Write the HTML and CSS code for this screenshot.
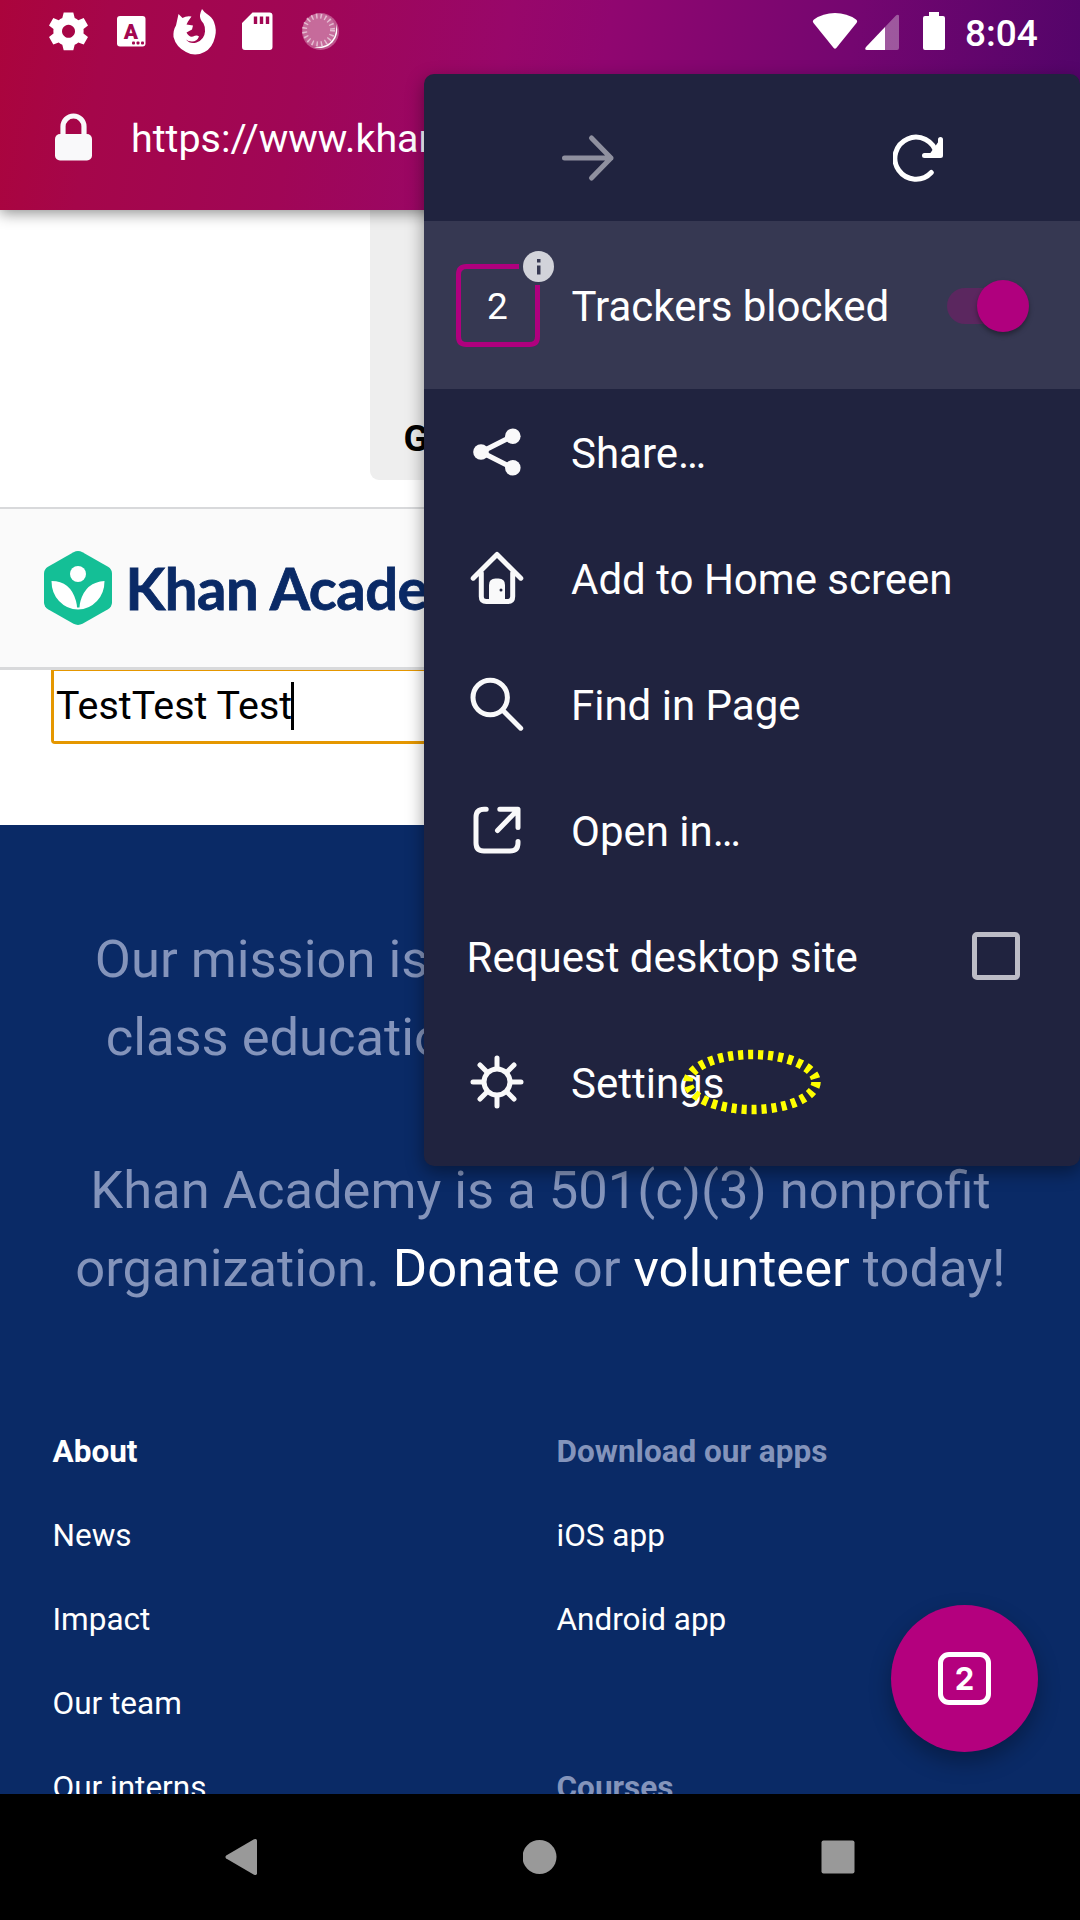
FILE: index.html
```html
<!DOCTYPE html>
<html lang="en">
<head>
<meta charset="utf-8">
<title>Khan Academy</title>
<link rel="stylesheet" href="styles.css">
</head>
<body>
<div class="screen">
  <header class="browser-head">
    <div class="status-bar">
      <svg class="status-left" width="300" height="63" viewBox="0 0 300 63">
        <g transform="translate(-6 0)" fill="#fff">
          <path fill-rule="evenodd" d="M23.700 12.500h9.600l1.400 5.500q2.200.9 3.600 2.300l5.400-2.200 4.300 7.400-4.500 3.600q.3 2.200 0 4.500l4.500 3.500-4.300 7.400-5.400-2.100q-1.400 1.500-3.600 2.400l-1.400 5.400h-9.600l-1.400-5.400q-2.200-.9-3.600-2.400l-5.400 2.100-4.300-7.400 4.500-3.500q-.3-2.300 0-4.500l-4.500-3.600 4.300-7.400 5.400 2.200q1.400-1.400 3.600-2.300zM28.500 24.800a6.500 6.500 0 1 0 .01 0z"/>
          <rect x="77" y="16" width="28.500" height="30.500" rx="3"/>
          <rect x="92" y="41.500" width="3" height="3" rx="1" fill="#a30750"/><rect x="96.500" y="41.500" width="3" height="3" rx="1" fill="#a30750"/><rect x="101" y="41.500" width="3" height="3" rx="1" fill="#a30750"/>
          <text class="badge-letter" x="91" y="38.500" text-anchor="middle">A</text>
          <path transform="translate(-1 0)" fill-rule="evenodd" d="M139.500 14l4 4q4-2.500 9-1.500l-3.500 5-1.500 3 6.500 1-1 4-5.500 3q2.500 5 6.500 4 4-2 6 0-2 5-7 5-4 0-6-2 4 5 10.500 3 8-3 8.500-11 .3-5-1.500-8-4-4-3.500-8.500.5-3 2-6 2 3 5 5 5 3 7 8 3 8 1 15-2.500 11-10.500 15-9.500 5-18.500 0-10-5-12.500-15-.5-7 2.500-11.500z"/>
          <path fill-rule="evenodd" d="M212.500 12.500h17a3 3 0 0 1 3 3v31.500a3 3 0 0 1-3 3h-24.500a3 3 0 0 1-3-3v-24zm1.300 4v7.500h3.400v-7.500zm6 0v7.500h3.400v-7.500zm6 0v7.500h3.400v-7.500z"/>
          <circle cx="280.500" cy="31.500" r="18.500" opacity=".32"/>
          <circle cx="278.500" cy="30" r="14" fill="none" stroke="#fff" stroke-width="5" stroke-dasharray="1.500 3" opacity=".55"/>
          <path d="M296 24a17.500 17.500 0 0 1-22 23q13 1 19-8 4-6 3-15z"/>
          <circle cx="279" cy="30" r="16.500" opacity=".13"/>
        </g>
      </svg>
      <svg class="status-right" width="140" height="63" viewBox="0 0 140 63" fill="#fff">
        <path d="M2.500 23q-1.500-2 .5-3.500 9-6.500 21-6.500t21 6.500q2 1.500.5 3.500L25.300 48q-1.300 1.500-2.600 0z"/>
        <path d="M91 15.500v32.500q0 2-2 2H77V27L86.500 17q3-3.500 4.500-1.500z" transform="translate(-3 0)" opacity=".33"/>
        <path d="M74 27v23H56q-3 0-1-3z"/>
        <path d="M118 12h10v4h4q2 0 2 2v30q0 2-2 2h-18q-2 0-2-2v-30q0-2 2-2h4z"/>
      </svg>
      <span class="clock">8:04</span>
    </div>
    <div class="url-bar">
      <svg width="38" height="48" viewBox="0 0 38 48"><rect x="0" y="21" width="37" height="26.500" rx="5" fill="#f9f9fa"/><path d="M8 23v-9.500a10.500 10.500 0 0 1 21 0v9.500" fill="none" stroke="#f9f9fa" stroke-width="5.200"/></svg>
      <span class="url">https://www.khanacademy.org</span>
    </div>
  </header>

  <main class="page">
    <section class="prompt-area"><div class="prompt">G</div></section>
    <section class="brand-bar">
      <svg width="68" height="74" viewBox="0 0 68 74">
        <path d="M29.500 1.200q4.500-2.200 9 0l25.500 14.500q4 2.300 4 7v28.500q0 4.700-4 7L38.500 72.800q-4.500 2.200-9 0L4 58.200q-4-2.300-4-7V22.700q0-4.700 4-7z" fill="#14bf96"/>
        <circle cx="34" cy="23" r="8" fill="#fff"/>
        <path d="M7.500 30q19 0 24.500 20 1 4 1 6.500h2.500q0-3 1-6.500Q42 31 60.500 30q0 12-7.500 20-8 8.500-19 8.500T15 50Q7.500 42 7.500 30z" fill="#fff"/>
      </svg>
      <span class="brand">Khan Academy</span>
    </section>
    <section class="search-area">
      <div class="field"><span>TestTest Test</span><i class="caret"></i></div>
    </section>
    <section class="site-footer">
      <p class="mission">Our mission is to provide a free, world-<br>class education to anyone, anywhere.</p>
      <p class="mission">Khan Academy is a 501(c)(3) nonprofit<br>organization. <b>Donate</b> or <b>volunteer</b> today!</p>
      <div class="columns">
        <ul>
          <li class="heading">About</li>
          <li>News</li>
          <li>Impact</li>
          <li>Our team</li>
          <li>Our interns</li>
        </ul>
        <ul>
          <li class="heading dim">Download our apps</li>
          <li>iOS app</li>
          <li>Android app</li>
          <li></li>
          <li class="heading dim">Courses</li>
        </ul>
      </div>
    </section>
  </main>

  <nav class="system-nav">
    <svg width="34" height="38" viewBox="0 0 34 38"><path d="M1.200 17.500L29 1.300q3-1.300 3 1.500v32.500q0 2.700-3 1.400L1.200 20.500q-1.500-1.500 0-3z" fill="#999"/></svg>
    <svg width="34" height="34" viewBox="0 0 34 34"><circle cx="16.500" cy="17" r="17" fill="#999"/></svg>
    <svg width="34" height="34" viewBox="0 0 34 34"><rect x=".5" y=".5" width="33" height="33" rx="2" fill="#999"/></svg>
  </nav>

  <button class="fab"><span>2</span></button>

  <aside class="menu">
    <div class="menu-nav">
      <svg width="54" height="48" viewBox="0 0 54 48" fill="none" stroke="#8f909f" stroke-width="5" stroke-linecap="round" stroke-linejoin="round"><path d="M3.500 24H50M30.500 4L50 24 30.500 44"/></svg>
      <svg width="52" height="48" viewBox="0 0 52 48" fill="none" stroke="#fff" stroke-width="5" stroke-linecap="round"><path d="M38.300 38.500A21 21 0 1 1 43.500 20"/><path d="M47.500 5.500V21.500H31.500" stroke-linejoin="round"/><path d="M44 14v7h-5z"/></svg>
    </div>
    <div class="row trackers">
      <div class="counter">
        <svg width="100" height="104" viewBox="0 0 100 104">
          <path d="M63 19.500H10.500q-8 0-8 8V89.500q0 8 8 8H73.500q8 0 8-8V38" fill="none" stroke="#b0007e" stroke-width="5"/>
          <circle cx="82.500" cy="19.500" r="15.500" fill="#d2d3da"/>
          <path d="M81 12h3.500v3.500h-3.500zM81 18.500h3.500v9h-3.500z" fill="#363852"/>
        </svg>
        <span>2</span>
      </div>
      <span class="label">Trackers blocked</span>
      <i class="switch"></i>
    </div>
    <div class="row">
      <svg width="54" height="54" viewBox="0 0 54 54" fill="#f9f9fa"><path d="M42.800 11L11.200 27l31.600 16" fill="none" stroke="#f9f9fa" stroke-width="5.200"/><circle cx="42.800" cy="11.200" r="7.800"/><circle cx="11" cy="27" r="7.800"/><circle cx="42.800" cy="42.800" r="7.800"/></svg>
      <span class="label">Share…</span>
    </div>
    <div class="row">
      <svg width="54" height="54" viewBox="0 0 54 54" fill="none" stroke="#f9f9fa" stroke-width="5" stroke-linecap="round" stroke-linejoin="round"><path d="M3.200 27.200L27 3.500 50.800 27.200M11.300 22v23.500q0 5 5 5h21.400q5 0 5-5V22"/><path d="M19 50V34q0-6.500 6.500-6.500h3q6.500 0 6.500 6.500V50z" fill="#f9f9fa" stroke="none"/><circle cx="31" cy="39" r="1.500" fill="#20233f" stroke="none"/></svg>
      <span class="label">Add to Home screen</span>
    </div>
    <div class="row">
      <svg width="54" height="54" viewBox="0 0 54 54" fill="none" stroke="#f9f9fa" stroke-width="5" stroke-linecap="round"><circle cx="20.200" cy="20.500" r="17.200"/><path d="M33 33.500L50.700 51.200"/></svg>
      <span class="label">Find in Page</span>
    </div>
    <div class="row">
      <svg width="54" height="54" viewBox="0 0 54 54" fill="none" stroke="#f9f9fa" stroke-width="5" stroke-linecap="round" stroke-linejoin="round"><path d="M16.200 6.200H14q-8 0-8 8V40q0 8 8 8h26q8 0 8-8v-1.500M29.800 6.200H48v18.300M27.500 27.500L47.500 7"/></svg>
      <span class="label">Open in…</span>
    </div>
    <div class="row check-row">
      <span class="label">Request desktop site</span>
      <i class="checkbox"></i>
    </div>
    <div class="row">
      <svg width="54" height="54" viewBox="0 0 54 54" fill="none" stroke="#f9f9fa" stroke-width="5" stroke-linecap="round"><circle cx="27" cy="27" r="13"/><path d="M27 3v9M27 42v9M3 27h9M42 27h9M10 10l7 7M37 37l7 7M44 10l-7 7M17 37l-7 7"/></svg>
      <span class="label">Settings</span>
    </div>
    <svg class="touch-mark" width="140" height="66" viewBox="0 0 140 66"><ellipse cx="70" cy="33" rx="64" ry="27.500" fill="none" stroke="#ff0" stroke-width="9.500" stroke-dasharray="5.100 4.900"/></svg>
  </aside>
</div>
</body>
</html>
```

FILE: styles.css
```css
* { box-sizing: border-box; }
body { margin: 0; font-family: Roboto, "Noto Sans", sans-serif; }
svg { display: block; flex: none; }

.screen {
  position: relative;
  display: flex;
  flex-direction: column;
  width: 1080px;
  height: 1920px;
  overflow: hidden;
  background: #000;
}

/* Browser header */
.browser-head {
  position: relative;
  z-index: 1;
  flex: none;
  height: 210px;
  background: linear-gradient(100deg, #ab043c 0%, #a5064a 10%, #a00656 28%, #98076a 46%, #900670 55%, #740670 77%, #500469 100%);
  box-shadow: 0 3px 14px rgba(0, 0, 0, .45);
}
.status-bar { display: flex; height: 63px; padding-left: 46px; }
.status-right { margin-left: 465px; }
.badge-letter { font: 900 21px Roboto, sans-serif; fill: #a30750; }
.clock { margin-left: 14px; color: #fff; font-size: 37px; font-weight: 500; line-height: 67px; }
.url-bar { display: flex; align-items: center; height: 147px; padding-left: 55px; gap: 38px; }
.url { padding-top: 3px; color: #fff; font-size: 39.4px; white-space: nowrap; }

/* Web page */
.page { flex: none; height: 1584px; overflow: hidden; background: #fff; }
.prompt-area { height: 297px; padding-left: 370px; }
.prompt {
  height: 270px;
  padding: 207px 0 0 33.500px;
  border-radius: 0 0 0 9px;
  background: #eee;
  color: #000;
  font-size: 37px;
  font-weight: 700;
  line-height: 44px;
}
.brand-bar {
  display: flex;
  align-items: center;
  gap: 14px;
  height: 163px;
  padding: 0 0 1px 43.500px;
  border-top: 2px solid #d8d9db;
  border-bottom: 3px solid #d8d9db;
  background: #fafafa;
}
.brand {
  color: #0a2a66;
  font: 700 58px Lato, sans-serif;
  letter-spacing: -.5px;
  white-space: nowrap;
  -webkit-text-stroke: .8px #0a2a66;
}
.search-area { height: 154.500px; padding-left: 51px; }
.field {
  display: flex;
  align-items: center;
  height: 74px;
  padding: 0 0 1px 2px;
  border: solid #e59700;
  border-width: 1px 0 3px 3px;
  border-radius: 0 0 0 4px;
  font-size: 39.4px;
}
.caret { width: 3px; height: 48px; margin-left: -1px; background: #000; }

.site-footer { height: 1000px; padding-top: 95px; background: #0a2a66; }
.mission {
  margin: 0 0 73.500px 1px;
  color: #8494bb;
  font-size: 52.500px;
  line-height: 78.750px;
  text-align: center;
  white-space: nowrap;
}
.mission b { color: #fff; font-weight: 400; }
.columns { display: grid; grid-template-columns: 504px 1fr; margin-top: 102px; padding-left: 52.500px; }
.columns ul { margin: 0; padding: 0; list-style: none; }
.columns li { height: 84px; color: #fff; font-size: 31.500px; line-height: 84px; }
.columns .heading { font-weight: 700; }
.columns .dim { color: #8494bb; }

.system-nav {
  display: flex;
  flex: none;
  align-items: center;
  justify-content: space-between;
  height: 126px;
  padding: 0 225px;
  background: #000;
}

/* Floating tab button */
.fab {
  position: absolute;
  z-index: 1;
  left: 891px;
  top: 1605px;
  display: flex;
  align-items: center;
  justify-content: center;
  width: 147px;
  height: 147px;
  padding: 0;
  border: 0;
  border-radius: 50%;
  background: #b4007e;
  box-shadow: 0 10px 22px rgba(0, 0, 0, .3);
}
.fab span {
  width: 53px;
  height: 53px;
  border: 5px solid #fff;
  border-radius: 11px;
  color: #fff;
  font: 700 31px/43px Inter, sans-serif;
}

/* Overflow menu */
.menu {
  position: absolute;
  z-index: 2;
  top: 74px;
  right: 0;
  width: 656px;
  height: 1092px;
  border-radius: 10px;
  background: #20233f;
  box-shadow: 0 6px 18px rgba(0, 0, 0, .4);
  color: #fff;
}
.menu-nav { display: flex; height: 147px; padding: 60px 0 0 136.500px; gap: 278.500px; }
.row { display: flex; align-items: center; height: 126px; padding: 0 0 1px 46px; gap: 47px; }
.label { padding-top: 4px; font-size: 42px; white-space: nowrap; }
.trackers { height: 168px; padding: 0 0 0 32px; gap: 15.500px; background: #363852; }
.trackers .label { padding-top: 3px; }
.counter { display: grid; height: 104px; margin-top: -13px; }
.counter > * { grid-area: 1 / 1; }
.counter span { width: 83px; padding-top: 38px; font-size: 37px; line-height: 44px; text-align: center; }
.switch {
  position: relative;
  width: 72px;
  height: 36px;
  margin-left: auto;
  margin-right: 61.500px;
  margin-top: 1px;
  border-radius: 18px;
  background: #5b275f;
}
.switch::after {
  content: "";
  position: absolute;
  right: -10px;
  top: -8px;
  width: 52px;
  height: 52px;
  border-radius: 50%;
  background: #b0007e;
  box-shadow: 0 3px 5px rgba(0, 0, 0, .35);
}
.check-row { padding-left: 42.500px; padding-right: 60px; justify-content: space-between; }
.checkbox { width: 48px; height: 48px; border: 5px solid #bcbcc6; border-radius: 5px; }
.touch-mark { position: absolute; left: 258px; top: 975px; }
```
